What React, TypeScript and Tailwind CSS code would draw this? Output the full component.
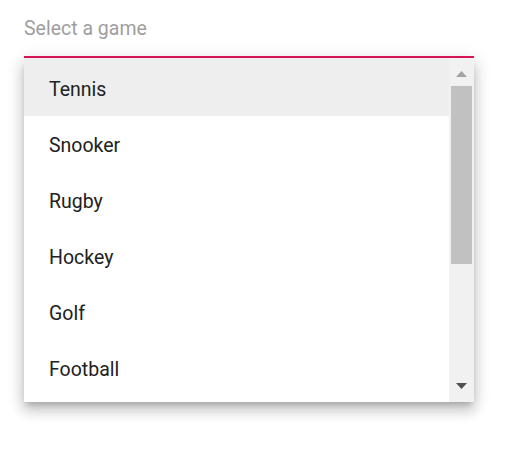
const games = ['Tennis', 'Snooker', 'Rugby', 'Hockey', 'Golf', 'Football'];

export default function App() {
  return (
    <div
      className="h-[450px] w-[505px] bg-white"
      style={{ fontFamily: 'Roboto, "Liberation Sans", sans-serif' }}
    >
      <div className="ml-6 w-[450px]">
        <div className="border-b-2 border-[#e3165b] pt-[17px] pb-[16px]">
          <span className="block text-[19.5px] leading-[23px] text-[#9e9e9e]">
            Select a game
          </span>
        </div>

        <div className="flex h-[344px] bg-white shadow-[0_5px_6px_-3px_rgba(0,0,0,0.2),0_9px_12px_1px_rgba(0,0,0,0.14),0_3px_16px_2px_rgba(0,0,0,0.12)]">
          <ul className="flex-1">
            {games.map((game, i) => (
              <li
                key={game}
                className={
                  i === 0
                    ? 'flex h-[58px] items-center bg-[#eeeeee] pt-[6px] pl-[25px] text-[19.5px] text-[#212121]'
                    : 'flex h-[56px] items-center pt-[4px] pl-[25px] text-[19.5px] text-[#212121]'
                }
              >
                {game}
              </li>
            ))}
          </ul>

          {/* scrollbar */}
          <div className="flex w-[25px] flex-col items-center bg-[#f1f1f1]">
            <div className="flex h-[28px] items-center justify-center pt-[3px]">
              <svg width="11" height="6" viewBox="0 0 11 6">
                <polygon points="5.5,0 11,6 0,6" fill="#a3a3a3" />
              </svg>
            </div>
            <div className="h-[178px] w-[21px] bg-[#c1c1c1]" />
            <div className="flex-1" />
            <div className="flex h-[24px] items-start justify-center pt-[5px]">
              <svg width="11" height="6" viewBox="0 0 11 6">
                <polygon points="0,0 11,0 5.5,6" fill="#505050" />
              </svg>
            </div>
          </div>
        </div>
      </div>
    </div>
  );
}
